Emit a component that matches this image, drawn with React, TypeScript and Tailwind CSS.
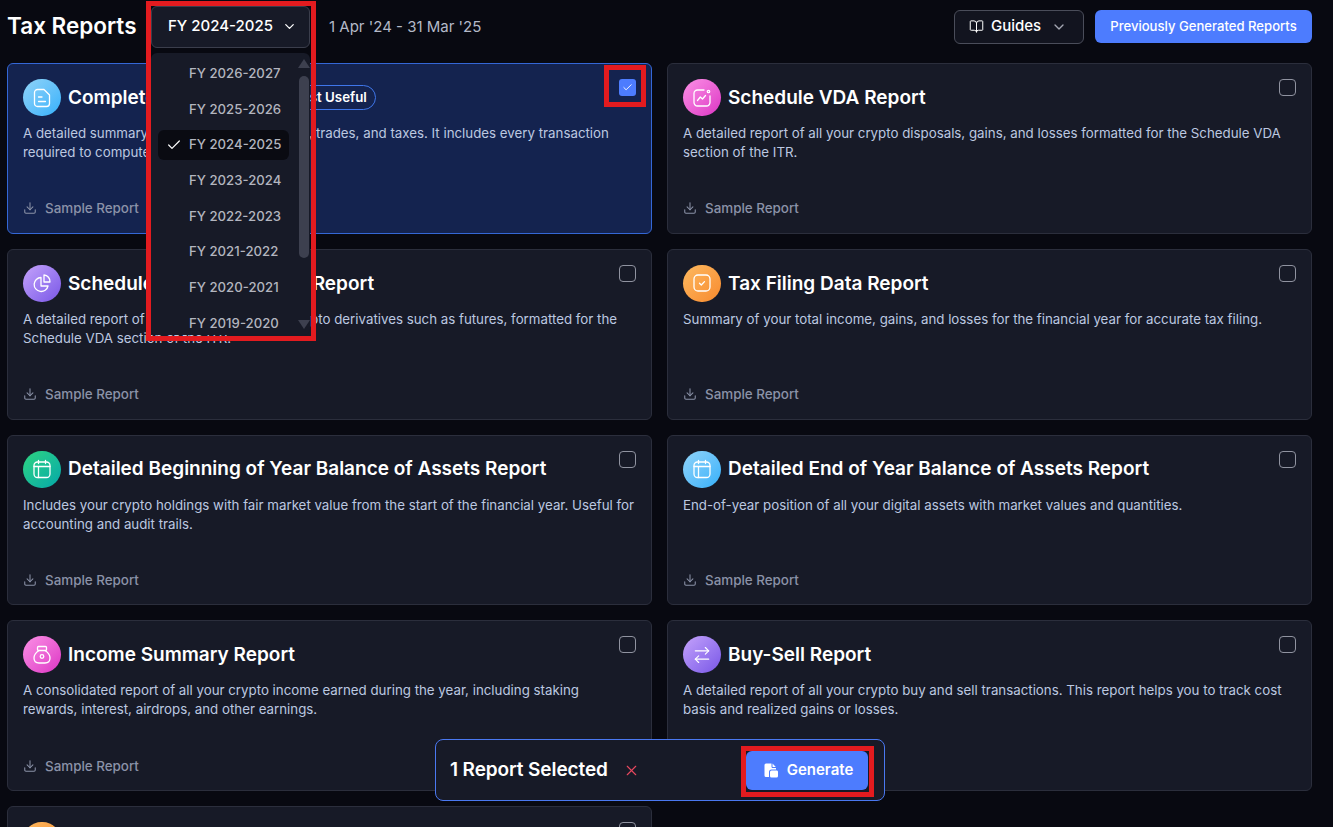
import * as React from "react";
import { BookOpen, Check, ChevronDown, Download, X, ArrowRightLeft } from "lucide-react";

const ICON = "w-[20px] h-[20px]";

const DocIcon = () => (
  <svg className={ICON} viewBox="0 0 20 20" fill="none" stroke="white" strokeWidth="1.3" strokeLinecap="round" strokeLinejoin="round">
    <path d="M5.5 1.5h6.5l5.5 5.5v8.500a3 3 0 0 1-3 3h-9a3 3 0 0 1-3-3v-11a3 3 0 0 1 3-3z" />
    <path d="M6.500 9h3.500M6.500 13.500h7" />
  </svg>
);

const TrendIcon = () => (
  <svg className={ICON} viewBox="0 0 20 20" fill="none" stroke="white" strokeWidth="1.3" strokeLinecap="round" strokeLinejoin="round">
    <path d="M12 2H5.500A3.500 3.500 0 0 0 2 5.500v9A3.500 3.500 0 0 0 5.500 18h9a3.500 3.500 0 0 0 3.500-3.500V8" />
    <path d="M5.500 12.500l2.800-3.500 2.200 2 3-3.500" />
    <circle cx="16.500" cy="3.500" r="1.200" />
  </svg>
);

const PieIcon = () => (
  <svg className={ICON} viewBox="0 0 20 20" fill="none" stroke="white" strokeWidth="1.3" strokeLinecap="round" strokeLinejoin="round">
    <path d="M9 4.500a7 7 0 1 0 7 8.500H9z" />
    <path d="M12 2a6.500 6.500 0 0 1 6 7h-6z" />
  </svg>
);

const SquareTickIcon = () => (
  <svg className={ICON} viewBox="0 0 20 20" fill="none" stroke="white" strokeWidth="1.3" strokeLinecap="round" strokeLinejoin="round">
    <rect x="2" y="2" width="16" height="16" rx="4" />
    <path d="M7.500 10.200l1.800 1.800 3.200-3.400" />
  </svg>
);

const CalendarIcon = () => (
  <svg className={ICON} viewBox="0 0 20 20" fill="none" stroke="white" strokeWidth="1.3" strokeLinecap="round" strokeLinejoin="round">
    <rect x="2" y="3" width="16" height="15.500" rx="3.500" />
    <path d="M2 7.500h16M6.500 1.500v3M13.500 1.500v3M6.500 7.500v11" />
  </svg>
);

const BagIcon = () => (
  <svg className={ICON} viewBox="0 0 20 20" fill="none" stroke="white" strokeWidth="1.3" strokeLinecap="round" strokeLinejoin="round">
    <rect x="5.500" y="1.500" width="9" height="4" rx="1" />
    <path d="M7 5.500C4 7.500 2 10 2 13c0 3.500 2.500 5 5 5h6c2.500 0 5-1.500 5-5 0-3-2-5.500-5-7.500" />
    <circle cx="10" cy="11.500" r="1.800" />
  </svg>
);

const FileSolidIcon = () => (
  <svg className="w-[16px] h-[16px]" viewBox="0 0 16 16" fill="white">
    <path d="M3 1.500h5.500v3.200c0 .7.600 1.300 1.300 1.300H13v1.500H8.500A2.500 2.500 0 0 0 6 10v5H3A1.500 1.500 0 0 1 1.500 13.500V3A1.500 1.500 0 0 1 3 1.500z" />
    <path d="M9.500 1.500l3.300 3.500h-2.800a.5.500 0 0 1-.5-.5z" />
    <path d="M8.500 8.500h5.500a1.500 1.500 0 0 1 1 1.500v4a1.500 1.500 0 0 1-1.500 1.500h-5A1.500 1.500 0 0 1 7 14v-4a1.500 1.500 0 0 1 1.500-1.500z" />
  </svg>
);

const reports = [
  {
    title: "Complete Tax Report",
    desc: "A detailed summary of all your crypto income, trades, and taxes. It includes every transaction required to compute your taxes.",
    icon: <DocIcon />,
    gradient: "bg-gradient-to-br from-[#8fd3f8] to-[#2fb1fb]",
    selected: true,
    badge: "Most Useful",
  },
  {
    title: "Schedule VDA Report",
    desc: "A detailed report of all your crypto disposals, gains, and losses formatted for the Schedule VDA section of the ITR.",
    icon: <TrendIcon />,
    gradient: "bg-gradient-to-br from-[#fb8fe6] to-[#dc2fc4]",
  },
  {
    title: "Schedule VDA Derivatives Report",
    desc: "A detailed report of gains and losses from crypto derivatives such as futures, formatted for the Schedule VDA section of the ITR.",
    icon: <PieIcon />,
    gradient: "bg-gradient-to-br from-[#c6a2fb] to-[#7a55e6]",
  },
  {
    title: "Tax Filing Data Report",
    desc: "Summary of your total income, gains, and losses for the financial year for accurate tax filing.",
    icon: <SquareTickIcon />,
    gradient: "bg-gradient-to-br from-[#fdb95f] to-[#f78a2c]",
  },
  {
    title: "Detailed Beginning of Year Balance of Assets Report",
    desc: "Includes your crypto holdings with fair market value from the start of the financial year. Useful for accounting and audit trails.",
    icon: <CalendarIcon />,
    gradient: "bg-gradient-to-br from-[#2ed47f] to-[#04a8a8]",
  },
  {
    title: "Detailed End of Year Balance of Assets Report",
    desc: "End-of-year position of all your digital assets with market values and quantities.",
    icon: <CalendarIcon />,
    gradient: "bg-gradient-to-br from-[#8fd3f8] to-[#2fb1fb]",
  },
  {
    title: "Income Summary Report",
    desc: "A consolidated report of all your crypto income earned during the year, including staking rewards, interest, airdrops, and other earnings.",
    icon: <BagIcon />,
    gradient: "bg-gradient-to-br from-[#fb8fe6] to-[#dc2fc4]",
  },
  {
    title: "Buy-Sell Report",
    desc: "A detailed report of all your crypto buy and sell transactions. This report helps you to track cost basis and realized gains or losses.",
    icon: <ArrowRightLeft className={ICON} color="white" strokeWidth={1.4} />,
    gradient: "bg-gradient-to-br from-[#c6a2fb] to-[#7a55e6]",
  },
  {
    title: "Transaction Ledger Report",
    desc: "A full ledger of your transactions for the financial year.",
    icon: <SquareTickIcon />,
    gradient: "bg-gradient-to-br from-[#fdb95f] to-[#f78a2c]",
  },
];

const years = [
  "FY 2026-2027",
  "FY 2025-2026",
  "FY 2024-2025",
  "FY 2023-2024",
  "FY 2022-2023",
  "FY 2021-2022",
  "FY 2020-2021",
  "FY 2019-2020",
];

const ReportCard = ({ report }: { report: (typeof reports)[number] }) => (
  <div
    className={`h-[170.8px] flex flex-col rounded-md border p-[15px] ${
      report.selected ? "bg-[#14234f] border-[#3467d6]" : "bg-[#171a27] border-[#2b2e3c]"
    }`}
  >
    <div className="flex items-start">
      <div className={`w-[38px] h-[37px] shrink-0 rounded-full flex items-center justify-center ${report.gradient}`}>
        {report.icon}
      </div>
      <div className="ml-[7px] h-[37px] pt-[1px] flex items-center text-[19px] font-semibold text-white">
        {report.title}
      </div>
      {report.badge && (
        <span className="ml-[20px] mt-[6px] h-[25px] px-[8px] flex items-center rounded-full border border-[#3f76ea] text-[13.3px] font-semibold text-white">
          {report.badge}
        </span>
      )}
      <div className="ml-auto">
        {report.selected ? (
          <span className="w-[17px] h-[17px] rounded-[3px] bg-[#4d7cfe] flex items-center justify-center">
            <Check className="w-[11px] h-[11px]" color="white" strokeWidth={2} />
          </span>
        ) : (
          <span className="block w-[17px] h-[17px] rounded-[4px] border border-[#9093a0]" />
        )}
      </div>
    </div>
    <p className="mt-[8px] text-[13.3px] leading-[19px] text-[#bcc8e0]">{report.desc}</p>
    <div className="mt-auto mb-[-0.5px] flex items-center gap-[8px] text-[13.4px] font-medium text-[#8b92a8]">
      <Download className="w-[14px] h-[14px]" strokeWidth={1.8} />
      Sample Report
    </div>
  </div>
);

export default function App() {
  return (
    <div className="relative h-[827px] w-[1333px] overflow-hidden bg-[#080911] pl-[7px] pr-[21px] font-['Inter',sans-serif]">
      {/* Header */}
      <div className="h-[63px] flex items-center pb-[9px]">
        <h1 className="w-[144px] pb-[3px] text-[22.5px] font-semibold text-white">Tax Reports</h1>
        <div className="w-[159px] h-[42px] pb-[1px] rounded-md border border-[#3b3e4c] bg-[#171a27] flex items-center pl-[16px] text-[15px] font-medium text-white">
          FY 2024-2025
          <ChevronDown className="ml-[9px] w-[15px] h-[15px]" color="white" strokeWidth={2} />
        </div>
        <span className="ml-[19px] text-[15px] text-[#b4b9c8]">1 Apr '24 - 31 Mar '25</span>
        <div className="ml-auto mb-[1px] flex items-center gap-[11px]">
          <div className="w-[130px] h-[34px] rounded-md border border-[#4a4d5a] bg-[#12141f] flex items-center pl-[14px] text-[15px] font-medium text-white">
            <BookOpen className="w-[15px] h-[15px]" strokeWidth={1.6} />
            <span className="ml-[7px]">Guides</span>
            <ChevronDown className="ml-[10px] w-[16px] h-[16px] text-[#a4a7b2]" strokeWidth={2} />
          </div>
          <button className="w-[217px] h-[33px] rounded-md bg-[#4d7cfe] text-[13.1px] font-medium text-white">
            Previously Generated Reports
          </button>
        </div>
      </div>

      {/* Report grid */}
      <div className="grid grid-cols-2 gap-[15px]">
        {reports.map((report) => (
          <ReportCard key={report.title} report={report} />
        ))}
      </div>

      {/* Year dropdown */}
      <div className="absolute left-[151px] top-[53px] w-[159px] h-[282px] rounded-md bg-[#171a27] pt-[0.4px] pl-[7px]">
        {years.map((year) => {
          const active = year === "FY 2024-2025";
          return (
            <div
              key={year}
              className={`w-[131px] h-[30px] mt-[5.65px] rounded-md flex items-center text-[13.2px] font-medium text-[#b3b5bf] ${
                active ? "bg-[#0a0b12]" : ""
              }`}
            >
              <span className="w-[31px] flex justify-center">
                {active && <Check className="w-[16px] h-[16px]" color="white" strokeWidth={1.8} />}
              </span>
              {year}
            </div>
          );
        })}
        <div className="absolute right-[0px] top-[6px] w-0 h-0 border-x-[6px] border-x-transparent border-b-[9px] border-b-[#3d404f]" />
        <div className="absolute right-[1px] top-[23px] w-[10px] h-[182px] rounded-full bg-[#3d404f]" />
        <div className="absolute right-[0px] bottom-[6px] w-0 h-0 border-x-[6px] border-x-transparent border-t-[9px] border-t-[#3d404f]" />
      </div>

      {/* Selection bar */}
      <div className="absolute left-[435px] top-[739px] w-[450px] h-[62px] rounded-lg border border-[#4a78f0] bg-[#171a27] flex items-center pl-[14px] pr-[16px]">
        <span className="text-[19px] font-semibold text-white tracking-[-0.1px]">1 Report Selected</span>
        <X className="ml-[15px] w-[17px] h-[17px] text-[#e8485f]" strokeWidth={1.6} />
        <button className="ml-auto w-[122px] h-[39px] pl-[2px] rounded-md bg-[#4d7cfe] flex items-center justify-center gap-[8px] text-[15px] font-semibold text-white">
          <FileSolidIcon />
          Generate
        </button>
      </div>

      {/* Red annotation boxes */}
      <div className="absolute left-[146px] top-[1px] w-[170px] h-[340px] border-[5px] border-[#e31b1f]" />
      <div className="absolute left-[604px] top-[65px] w-[42px] h-[42px] border-[5px] border-[#e31b1f]" />
      <div className="absolute left-[741px] top-[746px] w-[133px] h-[51px] border-[5px] border-[#e31b1f]" />
    </div>
  );
}
